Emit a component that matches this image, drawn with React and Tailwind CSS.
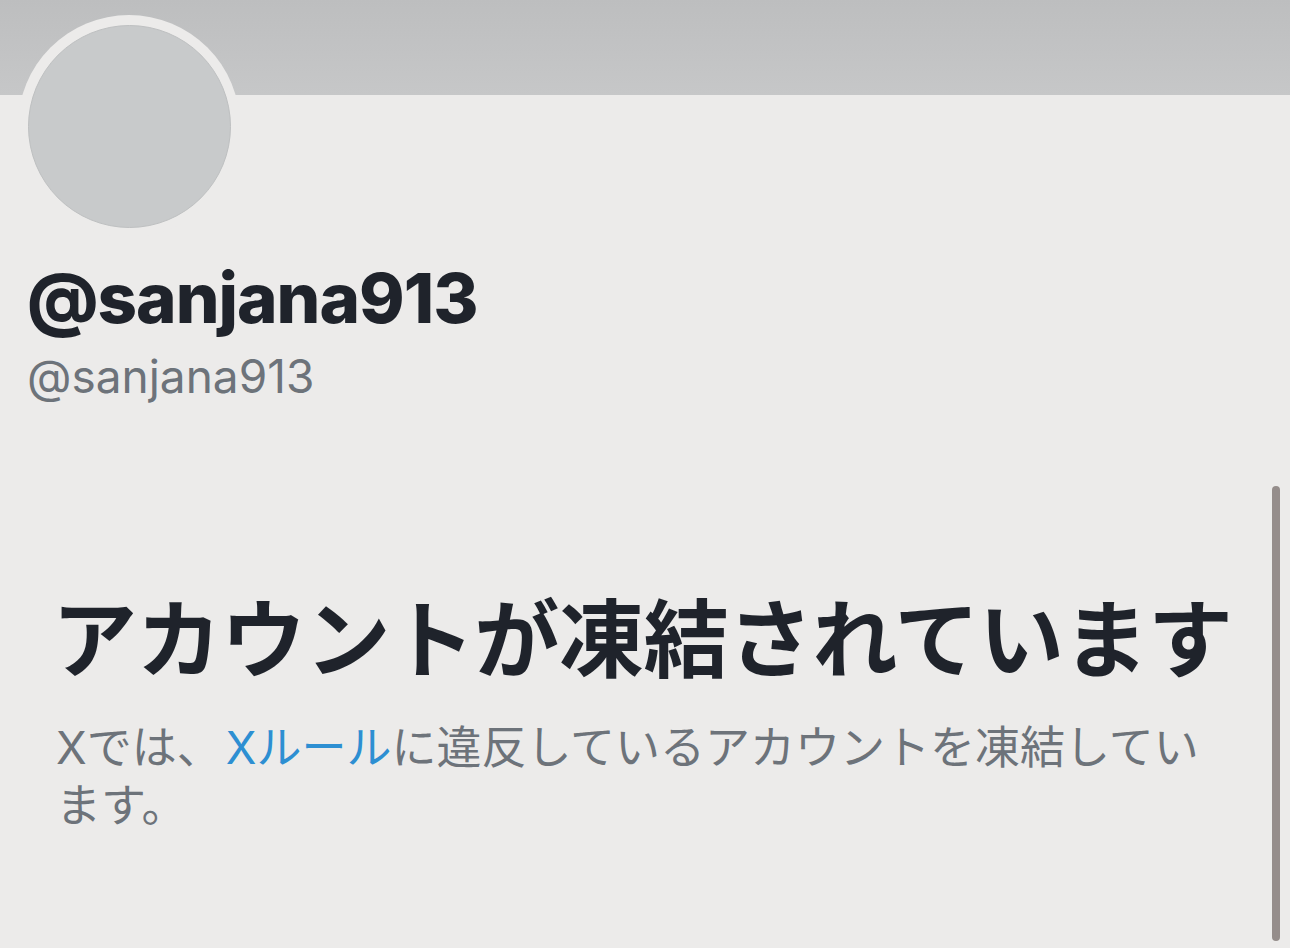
export default function App() {
  return (
    <div
      className="relative w-[1290px] h-[948px] overflow-hidden bg-[#ecebea]"
      style={{ fontFamily: '"Inter", "Noto Sans CJK JP", sans-serif' }}
    >
      <div className="h-[95px] bg-gradient-to-b from-[#bdbebf] to-[#c6c7c8]" />
      <div className="absolute left-[18px] top-[15px] w-[222px] h-[222px] rounded-full bg-[#ecebea] flex items-center justify-center">
        <div className="w-[203px] h-[203px] rounded-full bg-[#c8cacb] border border-[#bec0c1]" />
      </div>
      <div className="pt-[163px] pl-[27px]">
        <div className="text-[69px] leading-[80px] font-extrabold text-[#1f232b] tracking-[-1px]">@sanjana913</div>
        <div className="text-[46px] leading-[54px] text-[#6d737a] mt-[11px]">@sanjana913</div>
      </div>
      <div className="pl-[56px] pr-[40px] mt-[188px]">
        <div className="-ml-[4px] text-[85px] leading-[100px] font-bold text-[#1f232b] tracking-[-0.5px]">アカウントが凍結されています</div>
        <div className="text-[45px] leading-[58px] text-[#6d737a] mt-[28px] w-[1165px]">
          Xでは、<span className="ml-[4px] text-[#2d8fd2]">Xルール</span>に違反しているアカウントを凍結しています。
        </div>
      </div>
      <div className="absolute left-[1272px] top-[486px] w-[8px] h-[455px] rounded-full bg-[#958d8b]" />
    </div>
  );
}
